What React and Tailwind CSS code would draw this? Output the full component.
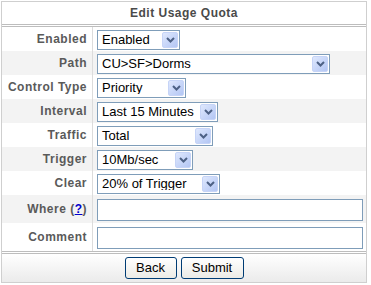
import React from "react";

function Chevron() {
  return (
    <svg width="9" height="6" viewBox="0 0 9 6" className="block">
      <path d="M1 1 L4.5 4.5 L8 1" fill="none" stroke="#4d6185" strokeWidth="2" />
    </svg>
  );
}

function Select({ value, width }) {
  return (
    <div
      className="flex h-[20px] items-center border border-[#7f9db9] bg-white"
      style={{ width }}
    >
      <div className="flex-1 pl-[4px] text-[13px] leading-none text-black whitespace-nowrap overflow-hidden">
        {value}
      </div>
      <div className="mr-[1px] flex h-[16px] w-[16px] items-center justify-center rounded-[2px] border border-[#c6d4f7] bg-gradient-to-br from-[#dfe8fd] to-[#b3c6f4]">
        <Chevron />
      </div>
    </div>
  );
}

function Row({ label, gray, tall, children }) {
  return (
    <div className={`flex ${tall ? "h-[28px]" : "h-[24px]"} ${gray ? "bg-[#f3f3f3]" : "bg-white"}`}>
      <div className="flex w-[90px] items-center justify-end pr-[5px] text-[12px] font-bold tracking-[0.5px] text-[#5a5a5a] whitespace-nowrap">
        {label}
      </div>
      <div className="w-[1px] bg-[#dcdcdc]" />
      <div className="flex flex-1 items-center pl-[4px] pt-[1px]">{children}</div>
    </div>
  );
}

export default function App() {
  return (
    <div className="bg-white p-[1px]" style={{ fontFamily: '"Liberation Sans", Arial, sans-serif' }}>
      <div className="w-[366px] border border-[#cfcfcf] bg-white">
        <div className="flex h-[22px] items-center justify-center text-[12px] font-bold tracking-[0.5px] text-[#4a4a4a]">
          Edit Usage Quota
        </div>
        <div className="h-[3px] border-y border-[#bdbdbd]" />
        <Row label="Enabled">
          <Select value="Enabled" width={83} />
        </Row>
        <Row label="Path" gray>
          <Select value="CU>SF>Dorms" width={233} />
        </Row>
        <Row label="Control Type">
          <Select value="Priority" width={89} />
        </Row>
        <Row label="Interval" gray>
          <Select value="Last 15 Minutes" width={121} />
        </Row>
        <Row label="Traffic">
          <Select value="Total" width={116} />
        </Row>
        <Row label="Trigger" gray>
          <Select value="10Mb/sec" width={96} />
        </Row>
        <Row label="Clear">
          <Select value="20% of Trigger" width={123} />
        </Row>
        <Row label={<span>Where (<span className="text-[#0000cc] underline">?</span>)</span>} gray tall>
          <div className="h-[22px] w-[266px] border border-[#7f9db9] bg-white" />
        </Row>
        <Row label="Comment" tall>
          <div className="h-[22px] w-[266px] border border-[#7f9db9] bg-white" />
        </Row>
        <div className="h-[3px] border-y border-[#bdbdbd]" />
        <div className="flex h-[28px] items-center justify-center gap-[4px] bg-gradient-to-b from-white to-[#ebebeb]">
          <button className="h-[22px] w-[52px] rounded-[3px] border border-[#003c74] bg-gradient-to-b from-white to-[#ecebe6] text-[13px] text-black">
            Back
          </button>
          <button className="h-[22px] w-[63px] rounded-[3px] border border-[#003c74] bg-gradient-to-b from-white to-[#ecebe6] text-[13px] text-black">
            Submit
          </button>
        </div>
      </div>
    </div>
  );
}
